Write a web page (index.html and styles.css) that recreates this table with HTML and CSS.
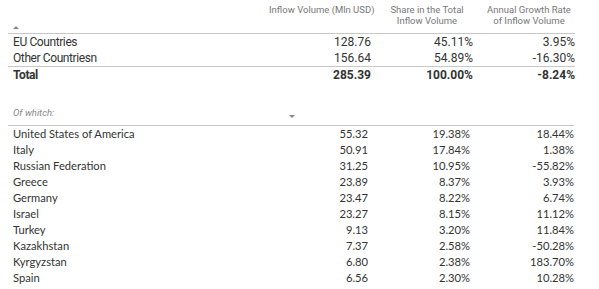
FILE: index.html
```html
<!DOCTYPE html>
<html lang="en">
<head>
    <meta charset="UTF-8">
    <title>Inflow Volume</title>
    <link rel="stylesheet" href="styles.css">
</head>
<body>
    <div class="page">
        <!-- Summary table -->
        <div class="grid summary">
            <div class="head label-head"><span class="sort-up"></span></div>
            <div class="head num-head">Inflow Volume (Mln USD)</div>
            <div class="head center-head">Share in the Total<br>Inflow Volume</div>
            <div class="head center-head">Annual Growth Rate<br>of Inflow Volume</div>

            <div class="cell label">EU Countries</div>
            <div class="cell num">128.76</div>
            <div class="cell num">45.11%</div>
            <div class="cell num">3.95%</div>

            <div class="cell label">Other Countriesn</div>
            <div class="cell num">156.64</div>
            <div class="cell num">54.89%</div>
            <div class="cell num">-16.30%</div>

            <div class="cell label total">Total</div>
            <div class="cell num total">285.39</div>
            <div class="cell num total">100.00%</div>
            <div class="cell num total">-8.24%</div>
        </div>

        <!-- Countries table -->
        <div class="grid countries">
            <div class="head sub-head">Of whitch:</div>
            <div class="head arrow-head"><span class="sort-down"></span></div>
            <div class="head"></div>
            <div class="head"></div>
        </div>
        <div class="grid countries rows" id="rows"></div>
    </div>

    <script>
        const data = [
            ['United States of America', '55.32', '19.38%', '18.44%'],
            ['Italy', '50.91', '17.84%', '1.38%'],
            ['Russian Federation', '31.25', '10.95%', '-55.82%'],
            ['Greece', '23.89', '8.37%', '3.93%'],
            ['Germany', '23.47', '8.22%', '6.74%'],
            ['Israel', '23.27', '8.15%', '11.12%'],
            ['Turkey', '9.13', '3.20%', '11.84%'],
            ['Kazakhstan', '7.37', '2.58%', '-50.28%'],
            ['Kyrgyzstan', '6.80', '2.38%', '183.70%'],
            ['Spain', '6.56', '2.30%', '10.28%']
        ];

        const rows = document.getElementById('rows');
        data.forEach(row => {
            row.forEach((value, idx) => {
                const cell = document.createElement('div');
                cell.className = idx === 0 ? 'cell label' : 'cell num';
                cell.textContent = value;
                rows.appendChild(cell);
            });
        });
    </script>
</body>
</html>
```

FILE: styles.css
```css
* {
    box-sizing: border-box;
    margin: 0;
    padding: 0;
}

body {
    background: #fff;
    color: #333;
}

.page {
    width: 599px;
    padding-left: 8px;
}

.grid {
    display: grid;
    width: 572px;
}

.summary {
    grid-template-columns: 261px 102px 102px 102px;
    font-family: "Roboto", "Liberation Sans", sans-serif;
    font-size: 12px;
}

.summary .label {
    letter-spacing: -0.4px;
}

.countries {
    width: 570px;
    grid-template-columns: 258px 102px 102px 104px;
    font-family: "Lato", "Noto Sans", sans-serif;
    font-size: 11.2px;
}

.head {
    color: #777;
    font-family: "Roboto", "Liberation Sans", sans-serif;
    font-size: 9.5px;
    line-height: 11px;
    white-space: nowrap;
    border-bottom: 1px solid #c8c8c8;
}

.summary .head {
    height: 34px;
    padding-top: 4px;
}

.num-head {
    text-align: right;
    padding-right: 3px;
}

.center-head {
    text-align: center;
    padding-left: 10px;
}

.label-head {
    position: relative;
}

.sort-up,
.sort-down {
    position: absolute;
    width: 0;
    height: 0;
    border-left: 3px solid transparent;
    border-right: 3px solid transparent;
}

.sort-up {
    left: 5px;
    bottom: 4px;
    border-bottom: 3px solid #888;
}

.countries .head {
    height: 32px;
    margin-top: 11px;
    position: relative;
}

.sub-head {
    font-style: italic;
    padding: 13px 0 0 5px;
    color: #888;
}

.sort-down {
    left: 23px;
    top: 21px;
    border-top: 3px solid #888;
}

.cell {
    height: 16px;
    line-height: 16px;
    white-space: nowrap;
}

.label {
    padding-left: 5px;
}

.num {
    text-align: right;
}

.total {
    font-weight: bold;
    border-top: 1px solid #c8c8c8;
    height: 17px;
}
```
